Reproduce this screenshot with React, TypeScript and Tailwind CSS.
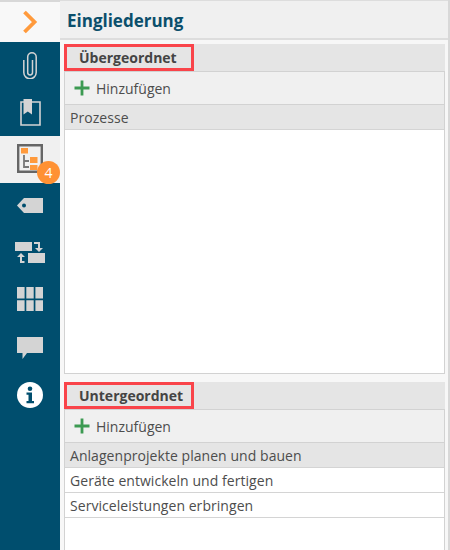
const font = { fontFamily: '"Open Sans", "Noto Sans", sans-serif' };

function Plus() {
  return (
    <svg width="16" height="16" viewBox="0 0 16 16" className="shrink-0">
      <path d="M8 0.500v15M0.500 8h15" stroke="#3c9a52" strokeWidth="2.8" fill="none" />
    </svg>
  );
}

function NavIcon({ children, active = false, pad = 0 }: { children: React.ReactNode; active?: boolean; pad?: number }) {
  return (
    <div
      className={`relative flex items-center justify-center w-[60px] h-[47px] ${active ? "bg-[#f0f0f0]" : ""}`}
      style={{ paddingBottom: pad }}
    >
      {children}
    </div>
  );
}

function Section({ title, rows, bodyClass }: { title: string; rows: string[]; bodyClass: string }) {
  return (
    <section className={`flex flex-col border-x border-t border-[#d2d2d2] bg-white ml-1 mr-[3px] shrink-0 ${bodyClass}`}>
      <div className="h-[27px] shrink-0 bg-[#e5e5e5] -mx-px -mt-px">
        <div className="flex items-center h-[27px] w-[130px] border-[3px] border-[#f9444a] pl-[12px] font-bold text-[14px] text-[#444444]">
          {title}
        </div>
      </div>
      <div className="h-[34px] shrink-0 flex items-center gap-[6px] pl-[9px] bg-[#f0f0f0] border-t border-b border-[#d2d2d2] text-[14px] text-[#4d4d4d]">
        <Plus />
        <span>Hinzufügen</span>
      </div>
      {rows.map((r, i) => (
        <div
          key={r}
          className={`h-[25px] shrink-0 flex items-center pl-[5px] border-b border-[#d4d4d4] text-[14px] tracking-[0.05px] text-[#4d4d4d] ${
            i === 0 ? "bg-[#e5e5e5]" : "bg-white"
          }`}
        >
          {r}
        </div>
      ))}
    </section>
  );
}

export default function App() {
  return (
    <div className="flex w-[450px] h-[550px] overflow-hidden bg-[#f7f7f7]" style={font}>
      <aside className="w-[60px] shrink-0 flex flex-col bg-[#004e6e]">
        <div className="h-[42px] flex items-center justify-center bg-[#f8f8f8] border-t-2 border-[#d8d8d8]">
          <svg width="16" height="24" viewBox="0 0 16 24">
            <path d="M2.500 2l10 10-10 10" stroke="#ff9a3c" strokeWidth="3.800" fill="none" />
          </svg>
        </div>
        <NavIcon pad={1}>
          <svg width="14" height="27" viewBox="0 0 14 27" fill="none" stroke="#d4d4d4" strokeWidth="1.500">
            <path d="M9.500 8v12.500a2.400 2.400 0 0 1-4.800 0V5a4 4 0 0 1 8.500 0v15.500a6 6 0 0 1-12.400 0V8" />
          </svg>
        </NavIcon>
        <NavIcon pad={1}>
          <svg width="21" height="27" viewBox="0 0 21 27">
            <path d="M1 3h19v23H1z" fill="none" stroke="#d4d4d4" strokeWidth="1.600" />
            <path d="M3.500 0h8.500v15.500l-4.200-3-4.300 3z" fill="#d4d4d4" />
          </svg>
        </NavIcon>
        <NavIcon active pad={2}>
          <svg width="26" height="29" viewBox="0 0 26 29">
            <path d="M1.200 1.200h23.600v26.600H1.200z" fill="none" stroke="#666666" strokeWidth="2.400" />
            <path d="M4 4h7v5.500H4z" fill="#ff9a3c" />
            <path d="M13 13h7.500v6H13zM13 21h7.500v5H13z" fill="#ff9a3c" />
            <path d="M7 11v12h5M7 17h5" fill="none" stroke="#777777" strokeWidth="1.800" />
          </svg>
          <div className="absolute left-[37px] top-[25px] w-[23px] h-[23px] rounded-full bg-[#ff9133] flex items-center justify-center text-white text-[14px]">
            4
          </div>
        </NavIcon>
        <NavIcon pad={2}>
          <svg width="26" height="15" viewBox="0 0 26 15">
            <path d="M7 0h19v15H7L0 7.500z" fill="#d4d4d4" />
            <circle cx="7" cy="7.500" r="2" fill="#004e6e" />
          </svg>
        </NavIcon>
        <NavIcon pad={2}>
          <svg width="30" height="21" viewBox="0 0 30 21">
            <path d="M0 0h17v9H0zM13 11h17v10H13z" fill="#d4d4d4" />
            <path d="M19 1h5v6M9.500 20H6v-6" fill="none" stroke="#d4d4d4" strokeWidth="2" />
            <path d="M20 6h8l-4 4zM2 15l4-4 4 4z" fill="#d4d4d4" />
          </svg>
        </NavIcon>
        <NavIcon pad={3}>
          <svg width="26" height="24" viewBox="0 0 26 24" fill="#d4d4d4">
            <path d="M0 0h7.600v11.500H0zM9.300 0h7.400v11.500H9.300zM18.400 0H26v11.500h-7.600zM0 13.200h7.600V24H0zM9.300 13.200h7.400V24H9.300zM18.400 13.200H26V24h-7.600z" />
          </svg>
        </NavIcon>
        <NavIcon>
          <svg width="26" height="22" viewBox="0 0 26 22">
            <path d="M0 0h26v16H10l-4.500 6v-6H0z" fill="#d4d4d4" />
          </svg>
        </NavIcon>
        <NavIcon>
          <svg width="26" height="26" viewBox="0 0 26 26">
            <circle cx="13" cy="13" r="13" fill="#ffffff" />
            <circle cx="13" cy="6.800" r="2.300" fill="#004e6e" />
            <path d="M9.500 10.500h5.500v8.500h2v2.200H9.500V19h2v-6.300h-2z" fill="#004e6e" />
          </svg>
        </NavIcon>
      </aside>
      <main className="flex-1 min-w-0 flex flex-col border-r-2 border-[#d8d8d8]">
        <header className="h-[40px] shrink-0 flex items-center pl-[7px] pt-[2px] bg-[#f0f0f0] border-t border-b-2 border-[#dddddd] font-bold text-[17px] text-[#0b4f6c]">
          Eingliederung
        </header>
        <div className="h-[4px] shrink-0" />
        <Section title="Übergeordnet" rows={["Prozesse"]} bodyClass="h-[330px] border-b" />
        <div className="h-[8px] shrink-0" />
        <Section
          title="Untergeordnet"
          rows={["Anlagenprojekte planen und bauen", "Geräte entwickeln und fertigen", "Serviceleistungen erbringen"]}
          bodyClass="h-[200px]"
        />
      </main>
    </div>
  );
}
